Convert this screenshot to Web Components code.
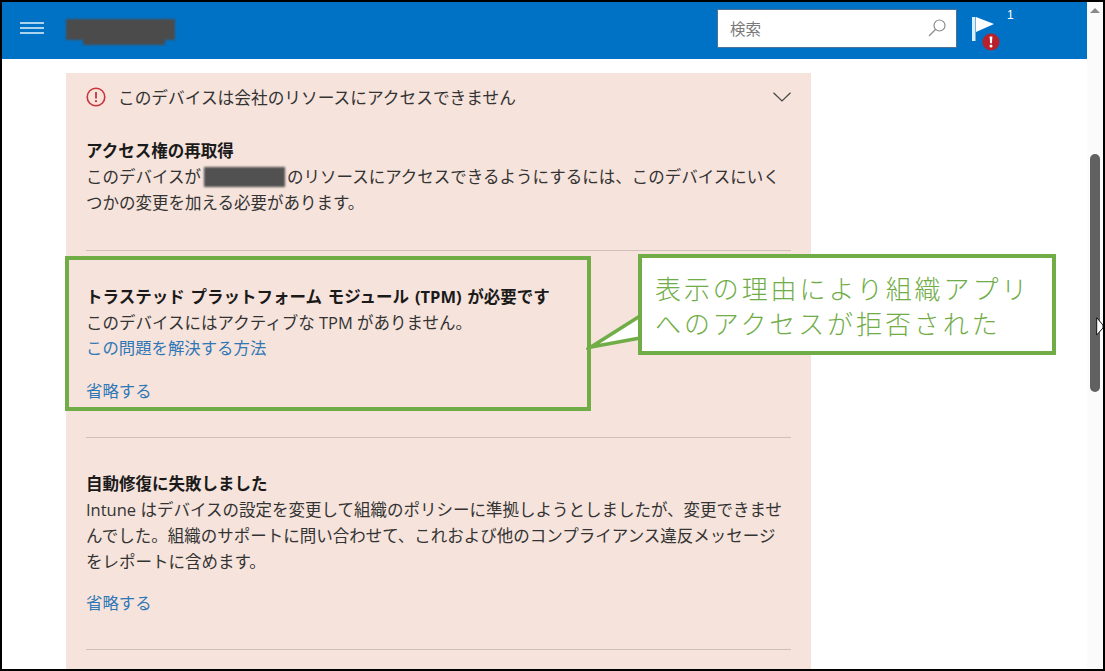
<!DOCTYPE html>
<html lang="ja">
<head>
<meta charset="utf-8">
<title>ポータル</title>
<style>
  html, body { margin: 0; padding: 0; background: #fff; }
</style>
</head>
<body>

<shot-frame>
  <app-header slot="header"></app-header>

  <notice-card title-text="このデバイスは会社のリソースにアクセスできません">
    <notice-section heading="アクセス権の再取得" style="--top: 15px; --bottom: 34px">
      このデバイスが<redact-bar></redact-bar>のリソースにアクセスできるようにするには、このデバイスにいく<br>つかの変更を加える必要があります。
    </notice-section>
    <notice-section heading="トラステッド プラットフォーム モジュール (TPM) が必要です" link="この問題を解決する方法" action="省略する" style="--gap: 17px">
      このデバイスにはアクティブな TPM がありません。
    </notice-section>
    <notice-section heading="自動修復に失敗しました" action="省略する" style="--gap: 15px">
      Intune はデバイスの設定を変更して組織のポリシーに準拠しようとしましたが、変更できませ<br>んでした。組織のサポートに問い合わせて、これおよび他のコンプライアンス違反メッセージ<br>をレポートに含めます。
    </notice-section>
  </notice-card>

  <scroll-rail slot="rail"></scroll-rail>
  <callout-note slot="overlay">表示の理由により組織アプリ<br>へのアクセスが拒否された</callout-note>
</shot-frame>

<script>
class ShotFrame extends HTMLElement {
    constructor() {
        super()
        this.attachShadow({mode: "open"}).innerHTML = `
            <style>
                :host {
                    display: grid;
                    grid-template-columns: 1fr 16px;
                    position: relative;
                    box-sizing: border-box;
                    width: 1105px;
                    height: 671px;
                    border: 2px solid #000;
                    overflow: hidden;
                    background: #fff;
                    color: #333;
                    font-family: "Open Sans", "Noto Sans CJK JP", sans-serif;
                    font-size: 16.5px;
                }
                .main { min-width: 0; overflow: hidden; }
                .content { padding: 14px 0 0 64px; }
            </style>
            <div class="main">
                <slot name="header"></slot>
                <div class="content"><slot></slot></div>
            </div>
            <slot name="rail"></slot>
            <slot name="overlay"></slot>
        `
    }
}

class AppHeader extends HTMLElement {
    constructor() {
        super()
        this.attachShadow({mode: "open"}).innerHTML = `
            <style>
                :host {
                    display: flex;
                    align-items: center;
                    height: 57px;
                    background: #0072c6;
                    padding-left: 18px;
                    box-sizing: border-box;
                }
                .menu { display: block; width: 24px; height: 12px; margin-bottom: 6px; }
                .logo {
                    position: relative;
                    width: 109px;
                    height: 21px;
                    margin: -2px 0 0 22px;
                    background: #4b4b4b;
                    filter: blur(1px);
                }
                .logo::after {
                    content: "";
                    position: absolute;
                    left: 17px;
                    top: 20px;
                    width: 82px;
                    height: 6px;
                    background: #4b4b4b;
                }
                .search {
                    display: flex;
                    align-items: center;
                    justify-content: space-between;
                    box-sizing: border-box;
                    width: 240px;
                    height: 39px;
                    margin: 0 0 5px auto;
                    padding: 0 9px 0 12px;
                    background: #fff;
                    border: 1px solid #4d7396;
                    color: #7a7a7a;
                    font-size: 15.5px;
                }
                .flag {
                    position: relative;
                    width: 36px;
                    height: 40px;
                    margin: 11px 79px 0 15px;
                    flex: none;
                }
                .flag svg { display: block; }
                .count {
                    position: absolute;
                    left: 35px;
                    top: -8px;
                    color: #fff;
                    font: 12px "Liberation Sans", sans-serif;
                }
            </style>
            <svg class="menu" viewBox="0 0 24 12">
                <path d="M0 1h24M0 6h24M0 11h24" stroke="#e3f2fb" stroke-width="1.4" fill="none"/>
            </svg>
            <div class="logo"></div>
            <div class="search">
                <span>検索</span>
                <svg width="20" height="20" viewBox="0 0 20 20" fill="none" stroke="#8b8b8b" stroke-width="1.2">
                    <circle cx="12.5" cy="7.5" r="5.5"/>
                    <path d="M8.5 11.5L2 18"/>
                </svg>
            </div>
            <div class="flag">
                <svg width="36" height="40" viewBox="0 0 36 40">
                    <path d="M0 1h3.5v24H0z" fill="#d8effc"/>
                    <path d="M4 1L22 8L4 16z" fill="#fff"/>
                    <circle cx="19" cy="26" r="8.5" fill="#b8202c"/>
                    <path d="M17.6 20.5h2.8l-.5 6.8h-1.8z" fill="#fff"/>
                    <circle cx="19" cy="30" r="1.5" fill="#fff"/>
                </svg>
                <span class="count">1</span>
            </div>
        `
    }
}

class NoticeCard extends HTMLElement {
    constructor() {
        super()
        const title = this.getAttribute("title-text")
        this.attachShadow({mode: "open"}).innerHTML = `
            <style>
                :host {
                    display: block;
                    width: 745px;
                    min-height: 640px;
                    background: #f6e3dc;
                    padding: 0 20px;
                    box-sizing: border-box;
                }
                .top {
                    display: flex;
                    align-items: center;
                    height: 48px;
                    margin-bottom: 2px;
                    gap: 12px;
                }
                .top span { flex: 1; font-size: 16.7px; }
                svg { display: block; flex: none; }
            </style>
            <div class="top">
                <svg width="20" height="20" viewBox="0 0 20 20">
                    <circle cx="10" cy="10" r="8.8" fill="none" stroke="#c8343a" stroke-width="1.6"/>
                    <path d="M10 5v6.5" stroke="#c8343a" stroke-width="1.8"/>
                    <circle cx="10" cy="14.2" r="1.1" fill="#c8343a"/>
                </svg>
                <span>${title}</span>
                <svg width="18" height="10" viewBox="0 0 18 10">
                    <path d="M.5.8L9 9l8.500-8.200" fill="none" stroke="#444" stroke-width="1.2"/>
                </svg>
            </div>
            <slot></slot>
        `
    }
}

class NoticeSection extends HTMLElement {
    constructor() {
        super()
        const heading = this.getAttribute("heading")
        const link = this.getAttribute("link")
        const action = this.getAttribute("action")
        this.attachShadow({mode: "open"}).innerHTML = `
            <style>
                :host {
                    display: block;
                    padding: var(--top, 33px) 0 var(--bottom, 33px);
                    border-bottom: 1px solid #cdbfba;
                    line-height: 26px;
                }
                .head { font-weight: 700; color: #1a1a1a; white-space: nowrap; word-spacing: 1.5px; }
                .body { white-space: nowrap; }
                .link, .action { display: block; color: #2f77b5; font-size: 16.4px; }
                .link { margin-top: -1px; }
                .action { margin-top: var(--gap, 17px); }
            </style>
            <div class="head">${heading}</div>
            <div class="body"><slot></slot></div>
            ${link ? `<span class="link">${link}</span>` : ""}
            ${action ? `<span class="action">${action}</span>` : ""}
        `
    }
}

class RedactBar extends HTMLElement {
    constructor() {
        super()
        this.attachShadow({mode: "open"}).innerHTML = `
            <style>
                :host {
                    display: inline-block;
                    width: 81px;
                    height: 20px;
                    margin: 0 2px 0 3px;
                    vertical-align: -4px;
                    background: #515151;
                    filter: blur(1px);
                }
            </style>
        `
    }
}

class ScrollRail extends HTMLElement {
    constructor() {
        super()
        this.attachShadow({mode: "open"}).innerHTML = `
            <style>
                :host {
                    display: block;
                    position: relative;
                    background: #fbfbfb;
                    padding: 6px 3px 0;
                    box-sizing: border-box;
                }
                .arrow {
                    width: 0;
                    margin: 0 auto;
                    border: 5px solid transparent;
                    border-top: 0;
                    border-bottom: 5px solid #8a8a8a;
                }
                .thumb {
                    width: 10px;
                    height: 238px;
                    margin-top: 141px;
                    border-radius: 5px;
                    background: #616161;
                }
                .cursor { position: absolute; left: 9px; top: 315px; }
            </style>
            <div class="arrow"></div>
            <div class="thumb"></div>
            <svg class="cursor" width="7" height="19" viewBox="0 0 7 19">
                <path d="M.7 .7L7 8v3L.7 18z" fill="#fff" stroke="#111" stroke-width="1"/>
            </svg>
        `
    }
}

class CalloutNote extends HTMLElement {
    constructor() {
        super()
        this.attachShadow({mode: "open"}).innerHTML = `
            <style>
                :host {
                    display: block;
                    position: absolute;
                    left: 0;
                    top: 0;
                    width: 100%;
                    height: 100%;
                    pointer-events: none;
                }
                .mark {
                    position: absolute;
                    left: 63px;
                    top: 254px;
                    width: 526px;
                    height: 155px;
                    box-sizing: border-box;
                    border: 4px solid #70ad47;
                }
                svg { position: absolute; left: 584px; top: 306px; }
                .note {
                    position: absolute;
                    left: 636px;
                    top: 252px;
                    box-sizing: border-box;
                    width: 418px;
                    height: 101px;
                    padding: 12px 0 0 13px;
                    background: #fff;
                    border: 4px solid #70ad47;
                    color: #70ad47;
                    font: 300 26px/35px "Noto Sans CJK JP", sans-serif;
                    letter-spacing: 2.9px;
                    white-space: nowrap;
                }
            </style>
            <div class="mark"></div>
            <svg width="56" height="44" viewBox="0 0 56 44">
                <path d="M54 8L5 39L54 30z" fill="#fff" stroke="#70ad47" stroke-width="3.500" stroke-miterlimit="10"/>
            </svg>
            <div class="note"><slot></slot></div>
        `
    }
}

customElements.define("shot-frame", ShotFrame)
customElements.define("app-header", AppHeader)
customElements.define("notice-card", NoticeCard)
customElements.define("notice-section", NoticeSection)
customElements.define("redact-bar", RedactBar)
customElements.define("scroll-rail", ScrollRail)
customElements.define("callout-note", CalloutNote)
</script>
</body>
</html>
